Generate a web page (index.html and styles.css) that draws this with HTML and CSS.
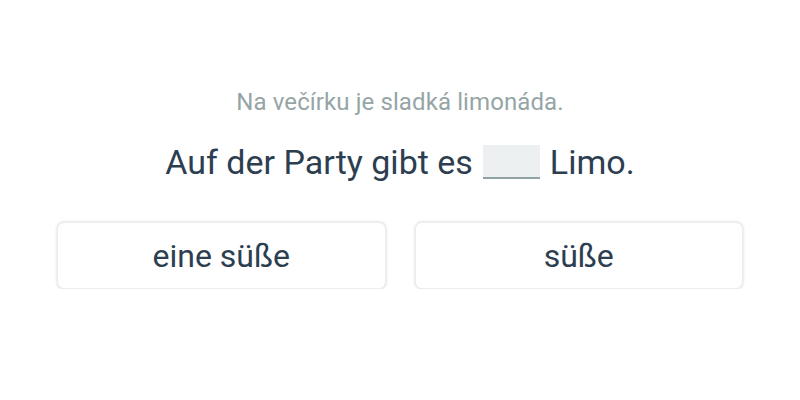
FILE: index.html
```html
<!DOCTYPE html>
<html lang="de">
<head>
<meta charset="utf-8">
<link rel="stylesheet" href="styles.css">
</head>
<body>
<main class="exercise">
  <p class="hint">Na večírku je sladká limonáda.</p>
  <p class="sentence">Auf der Party gibt es <span class="blank"></span> Limo.</p>
  <div class="options">
    <button class="option">eine süße</button>
    <button class="option">süße</button>
  </div>
</main>
</body>
</html>
```

FILE: styles.css
```css
html, body {
  margin: 0;
  padding: 0;
  background: #ffffff;
}
body {
  font-family: Roboto, "Liberation Sans", sans-serif;
  color: #2c3e50;
}
.exercise {
  width: 686px;
  margin: 0 auto;
  padding-top: 86px;
  display: flex;
  flex-direction: column;
  align-items: center;
}
.hint {
  margin: 0;
  font-size: 24px;
  line-height: 32px;
  letter-spacing: 0.1px;
  color: #95a5a6;
}
.sentence {
  margin: 22px 0 0;
  font-size: 34px;
  line-height: 44px;
  display: flex;
  align-items: center;
  gap: 9px;
}
.blank {
  display: inline-block;
  width: 57px;
  height: 32px;
  background: #ecf0f1;
  border-bottom: 2px solid #8fa3a3;
  margin: 0 1px;
}
.options {
  margin-top: 38px;
  width: 100%;
  display: grid;
  grid-template-columns: 1fr 1fr;
  gap: 29px;
}
.option {
  height: 67px;
  background: #ffffff;
  border: 1px solid #ececec;
  border-radius: 7px;
  box-shadow: 0 0 3px rgba(0, 0, 0, 0.18);
  font-family: Roboto, "Liberation Sans", sans-serif;
  font-size: 32px;
  color: #2c3e50;
  cursor: pointer;
}
```
